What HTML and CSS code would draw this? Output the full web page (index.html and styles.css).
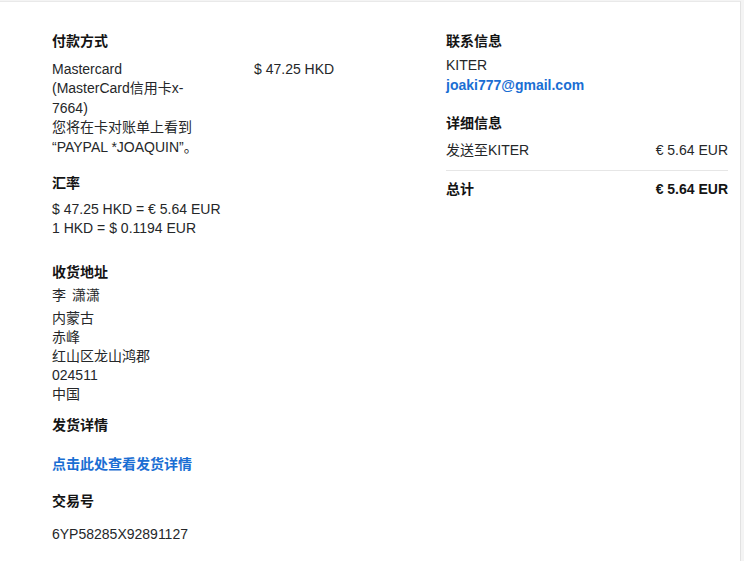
FILE: index.html
```html
<!DOCTYPE html>
<html lang="zh-CN">
<head>
<meta charset="utf-8">
<title>交易详情</title>
<link rel="stylesheet" href="styles.css">
</head>
<body>
<div class="frame">
  <div class="grid">
    <div class="col-left">
      <section class="sec sec-pay">
        <h3 class="heading">付款方式</h3>
        <div class="pay-row">
          <div class="pay-text">
            <div>Mastercard</div>
            <div>(MasterCard信用卡x-<br>7664)</div>
            <div>您将在卡对账单上看到</div>
            <div>“PAYPAL *JOAQUIN”。</div>
          </div>
          <div class="pay-amount">$ 47.25 HKD</div>
        </div>
      </section>
      <section class="sec sec-rate">
        <h3 class="heading">汇率</h3>
        <div class="text">$ 47.25 HKD = € 5.64 EUR</div>
        <div class="text">1 HKD = $ 0.1194 EUR</div>
      </section>
      <section class="sec sec-addr">
        <h3 class="heading">收货地址</h3>
        <div class="text name">李 潇潇</div>
        <div class="text">内蒙古</div>
        <div class="text">赤峰</div>
        <div class="text">红山区龙山鸿郡</div>
        <div class="text">024511</div>
        <div class="text">中国</div>
      </section>
      <section class="sec sec-ship">
        <h3 class="heading">发货详情</h3>
        <a class="link" href="#">点击此处查看发货详情</a>
      </section>
      <section class="sec sec-txn">
        <h3 class="heading">交易号</h3>
        <div class="text">6YP58285X92891127</div>
      </section>
    </div>
    <div class="col-right">
      <section class="sec sec-contact">
        <h3 class="heading">联系信息</h3>
        <div class="text">KITER</div>
        <a class="link email" href="#">joaki777@gmail.com</a>
      </section>
      <section class="sec sec-detail">
        <h3 class="heading">详细信息</h3>
        <div class="row">
          <span>发送至KITER</span>
          <span>€ 5.64 EUR</span>
        </div>
        <div class="row total">
          <span>总计</span>
          <span>€ 5.64 EUR</span>
        </div>
      </section>
    </div>
  </div>
</div>
</body>
</html>
```

FILE: styles.css
```css
html, body {
  margin: 0;
  padding: 0;
}
body {
  background: #f4f4f4;
  font-family: "Liberation Sans", "Noto Sans CJK SC", sans-serif;
  font-size: 14px;
  line-height: 19.6px;
  color: #252729;
}
.frame {
  width: 740px;
  height: 559px;
  margin-top: 1px;
  background: #ffffff;
  border-top: 1px solid #e9e9e9;
  border-right: 1px solid #e2e2e2;
}
.grid {
  display: grid;
  grid-template-columns: 342px 282px;
  column-gap: 52px;
  padding: 30px 0 0 52px;
}
.heading {
  margin: 0;
  font-size: 14px;
  line-height: 19.6px;
  font-weight: 700;
  color: #141414;
}
.sec { margin: 0; }
.text { line-height: 19.6px; }

.sec-pay .heading { margin-bottom: 8px; }
.pay-row {
  display: grid;
  grid-template-columns: 202px auto;
}
.sec-rate { margin-top: 16px; }
.sec-rate .heading { margin-bottom: 6.5px; }
.sec-addr { margin-top: 24px; }
.sec-addr .heading { margin-bottom: 3.5px; }
.sec-addr .name { margin-bottom: 3.5px; word-spacing: 2px; }
.sec-addr .text:not(.name) { line-height: 19px; }
.sec-ship { margin-top: 12px; }
.sec-ship .heading { margin-bottom: 19px; }
.link {
  display: block;
  color: #1a6ed3;
  font-weight: 700;
  text-decoration: none;
}
.sec-txn { margin-top: 18px; }
.sec-txn .heading { margin-bottom: 13px; }

.sec-contact .heading { margin-bottom: 4.5px; }
.sec-detail { margin-top: 19px; }
.sec-detail .heading { margin-bottom: 7.5px; }
.row {
  display: flex;
  justify-content: space-between;
}
.row.total {
  margin-top: 9px;
  padding-top: 9px;
  border-top: 1px solid #e6e6e6;
  font-weight: 700;
  color: #141414;
}
```
